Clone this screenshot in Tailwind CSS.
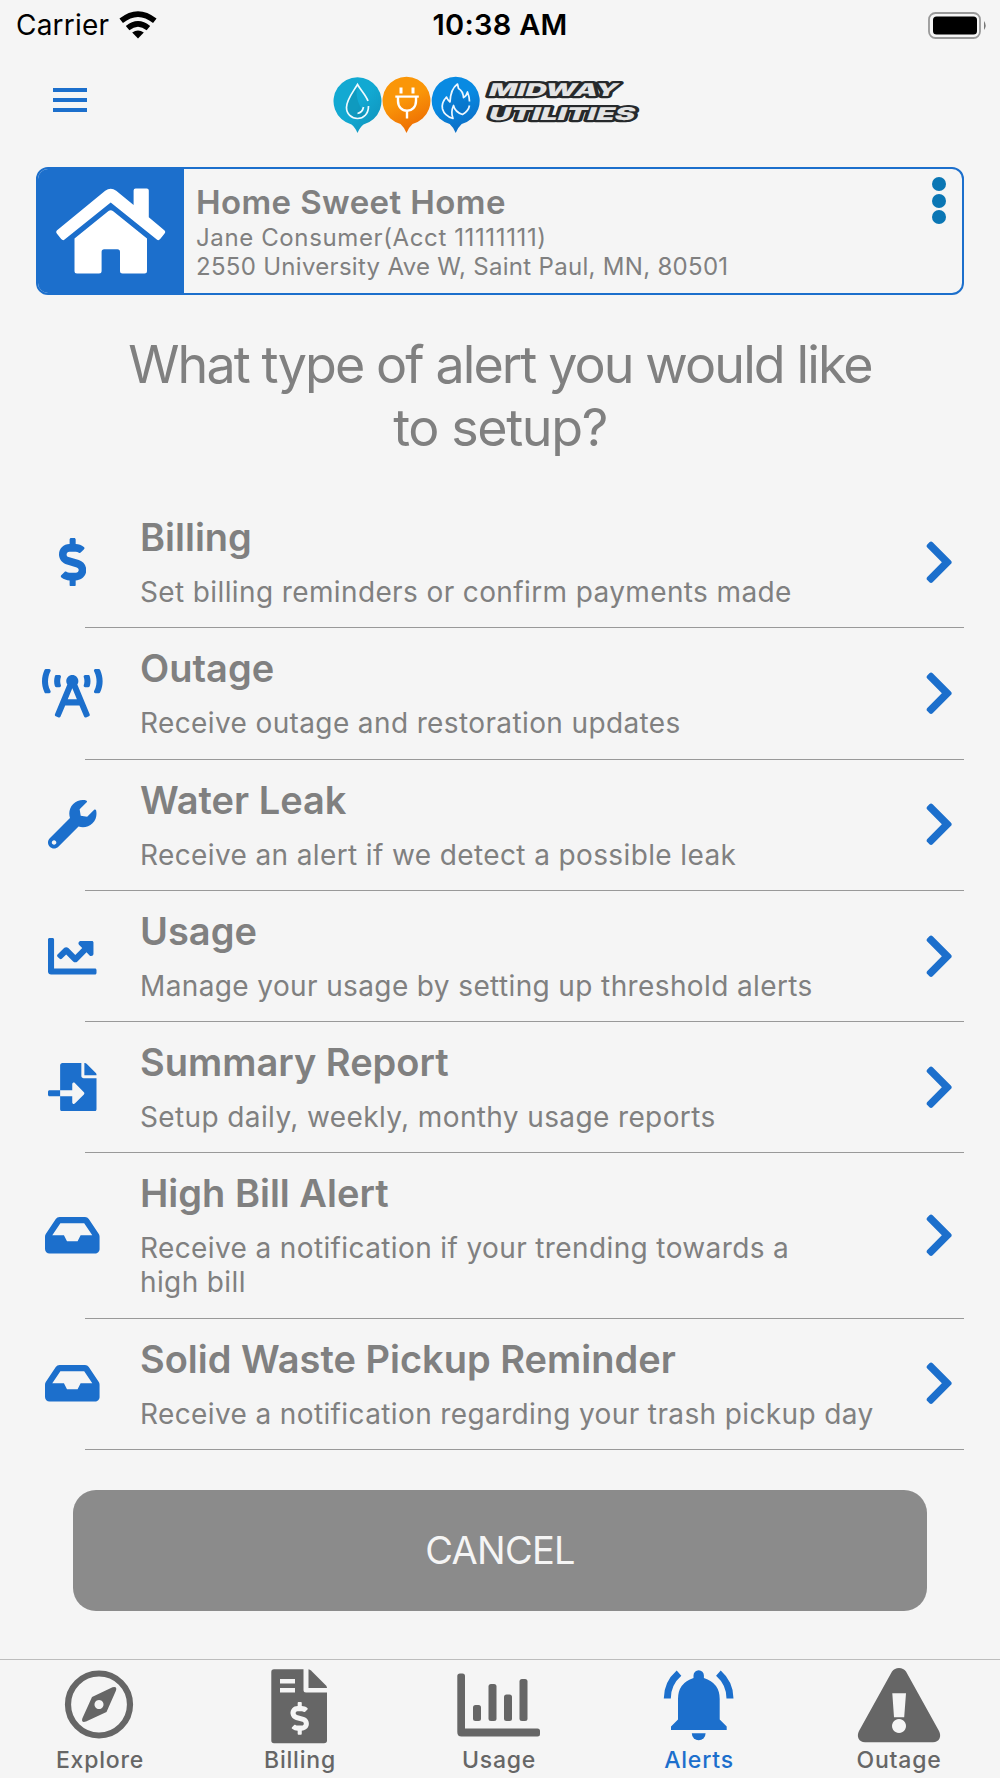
<!DOCTYPE html><html lang="en">
<head><meta charset="UTF-8"/><meta name="viewport" content="width=device-width, initial-scale=1.0"/>
<title>Midway Utilities - Alerts</title><script src="https://cdn.jsdelivr.net/npm/@tailwindcss/browser@4"></script></head>
<body class="bg-[#f5f5f5] font-['Inter',sans-serif] text-[#808080] w-[1000px] h-[1778px] flex flex-col overflow-hidden">

<!-- STATUS BAR -->
<div class="h-[50px] shrink-0 grid grid-cols-3 items-center text-black text-[28px] leading-[50px] pl-4 pr-3">
  <div class="flex items-center gap-2.5">
    <span class="tracking-[0.2px]">Carrier</span>
    <svg class="w-[38px] h-[28px]" viewBox="0 0 38 28">
      <path d="M19 27.5L13.2 21.6Q19 17.2 24.8 21.6Z"/>
      <path d="M8.6 17.2Q19 8.6 29.4 17.2M2.2 9.8Q19 -3.6 35.8 9.8" fill="none" stroke="#000" stroke-width="5.6"/>
    </svg>
  </div>
  <div class="text-center text-[29px] font-semibold tracking-[0.3px] pr-1">10:38 AM</div>
  <svg class="justify-self-end w-[60px] h-[27px]" viewBox="0 0 60 27">
    <rect x="1" y="1" width="51" height="25" rx="6.5" fill="none" stroke="#999" stroke-width="1.8"/>
    <rect x="5" y="4.5" width="44" height="18" rx="3.5"/>
    <path d="M56 9q3.3 4.500 0 9z" fill="#777"/>
  </svg>
</div>

<!-- HEADER -->
<header class="h-[117px] shrink-0 flex pl-[53px] pt-[26px]">
  <div class="mt-3 w-[34px] h-[24px] flex flex-col justify-between">
    <i class="h-[4px] bg-[#1c6fcc]"></i><i class="h-[4px] bg-[#1c6fcc]"></i><i class="h-[4px] bg-[#1c6fcc]"></i>
  </div>
  <svg class="ml-[246px] w-[308px] h-[58px]" viewBox="333 76 308 58">
    <defs>
      <linearGradient id="g1" x1="0" y1="0" x2="1" y2="1"><stop offset=".5" stop-color="#12a9d2"/><stop offset="1" stop-color="#0f8fb8"/></linearGradient>
      <linearGradient id="g2" x1="0" y1="0" x2=".4" y2="1"><stop offset=".5" stop-color="#fa9608"/><stop offset="1" stop-color="#ee7003"/></linearGradient>
      <linearGradient id="g3" x1="0" y1="0" x2=".4" y2="1"><stop offset=".5" stop-color="#088ae2"/><stop offset="1" stop-color="#0b70c8"/></linearGradient>
    </defs>
    <path d="M351.500 124.500a24 24 0 1 1 12 0q-3.500 2.500-6 8.500q-2.500-6-6-8.500z" fill="url(#g1)"/>
    <path d="M400.500 124a24 24 0 1 1 12 0q-3.500 3-6 9q-2.500-6-6-9z" fill="url(#g2)"/>
    <path d="M449.700 124a24 24 0 1 1 12 0q-3.500 3-6 9q-2.500-6-6-9z" fill="url(#g3)"/>
    <path d="M357.500 84.500C353 92 346.500 99.500 346.500 107.500C346.500 114 351.500 118.500 357.500 118.500C361 118.500 364 117 366 114.500C360 108 354 97 357.500 84.500z" fill="#0b7f9f" opacity=".35"/>
    <path d="M368 101C366 95.500 361 90.500 357.500 84.500C353 92 346.500 99.500 346.500 107.500C346.500 114 351.500 118.500 357.500 118.500C363.500 118.500 368.500 114 368.500 106M357.500 113.500Q362.500 112.500 363.500 107" fill="none" stroke="#eefaff" stroke-width="1.7"/>
    <g fill="none" stroke="#fff">
      <path d="M401 87.500v6M413 87.500v6" stroke-width="3"/>
      <path d="M395.300 96.600h23.500" stroke-width="2.200"/>
      <path d="M398 97v4c0 6 4 9.800 9 9.800s9-3.800 9-9.800v-4M407 111v7.500" stroke-width="2.400"/>
    </g>
    <path d="M444 115Q450 118 453 119L452 105L458 113L463 115L469 107L468 97L464 101L464 94L460 96L457 84L450 94L448 101L444 97z" fill="#0864b8" opacity=".35"/>
    <path d="M469.500 101.500Q469.500 97 467.500 92Q466.500 96 463.500 97.500Q463 91 458.500 88.500L457.500 84Q450.500 89 450 102Q447.500 100 446.500 97Q441 103 442.500 109Q444.500 116 453 118.500Q450.500 112 453.500 105.500Q455 112 462.500 114.500Q468.500 111 469.500 105.500" fill="none" stroke="#eef7ff" stroke-width="1.700" stroke-linejoin="round"/>
    <g font-family="Inter" font-weight="900" font-size="17.500" fill="#e4e4e4" stroke="#26292b" stroke-width="4.400" stroke-linejoin="round" paint-order="stroke">
      <text transform="translate(487.500 96) skewX(-18)" textLength="129" lengthAdjust="spacingAndGlyphs">MIDWAY</text>
      <text transform="translate(487.500 119.500) skewX(-18)" textLength="146" lengthAdjust="spacingAndGlyphs">UTILITIES</text>
    </g>
  </svg>
</header>

<main class="flex-1 px-9 flex flex-col">

  <!-- ACCOUNT CARD -->
  <section class="h-[128px] shrink-0 flex border-[2.5px] border-[#1c6fcc] rounded-xl overflow-hidden">
    <div class="w-[146px] bg-[#1c6fcc] shrink-0">
      <svg class="w-[146px] h-[124px]" viewBox="38 169 146 124" fill="#fff">
        <path d="M105.200 190.800Q110.700 186.500 116.200 190.800L133.600 205V190.500Q133.600 188.500 135.600 188.500H146.800Q148.800 188.500 148.800 190.500V217.300L164.600 230.500Q166 232 164.600 233.500L160.200 239Q158.500 241 156.800 239.500L110.700 202.500L64.600 239.500Q62.900 241 61.200 239L56.800 233.500Q55.400 232 56.800 230.500Z"/>
        <path d="M74.500 238.500L108.500 211Q110.700 209.300 112.900 211L147 238.500V271Q147 273.500 144.500 273.500H122.500Q120 273.500 120 271V252Q120 249.300 117.400 249.300H104.200Q101.600 249.300 101.600 252V271Q101.600 273.500 99 273.500H77Q74.500 273.500 74.500 271Z"/>
      </svg>
    </div>
    <div class="flex-1 pl-3 pt-3.5">
      <div class="text-[33px] leading-[39px] pb-px font-semibold tracking-[0.4px]">Home Sweet Home</div>
      <div class="text-[24px] leading-[29px] tracking-[0.62px]">Jane Consumer(Acct 11111111)</div>
      <div class="text-[24px] leading-[29px] tracking-[0.3px]">2550 University Ave W, Saint Paul, MN, 80501</div>
    </div>
    <div class="w-[30px] pt-2 flex flex-col gap-[2.700px]">
      <i class="size-[14px] rounded-full bg-[#0a76b4]"></i><i class="size-[14px] rounded-full bg-[#0a76b4]"></i><i class="size-[14px] rounded-full bg-[#0a76b4]"></i>
    </div>
  </section>

  <h1 class="mt-[38px] h-[164px] shrink-0 text-[52px] leading-[63px] text-center tracking-[-1.900px]">What type of alert you would like<br><span class="tracking-[-1.400px]">to setup?</span></h1>

  <!-- ALERT TYPES -->
  <ul id="alertList"></ul>

  <button class="mx-[37px] mt-[40px] h-[121px] shrink-0 rounded-[23px] bg-[#8b8b8b] text-[#f5f5f5] text-[38px] tracking-[-0.700px]">CANCEL</button>
</main>

<!-- TAB BAR -->
<nav class="h-[119px] shrink-0 border-t border-[#bdbdbd] grid grid-cols-5 text-center text-[23px] leading-[28px] font-medium tracking-[0.800px] text-[#666]">
  <a class="flex flex-col items-center">
    <svg class="w-[90px] h-[86px]" viewBox="55 1660 90 86" fill="currentColor">
      <circle cx="99" cy="1704.500" r="31" fill="none" stroke="currentColor" stroke-width="6.200"/>
      <path fill-rule="evenodd" d="M92 1697L112.500 1687.300Q117.300 1686 116 1690.500L106.500 1712L86 1721.500Q81 1723 82.300 1718.500ZM99 1700a4.500 4.500 0 1 0 .01 0z"/>
    </svg><span>Explore</span>
  </a>
  <a class="flex flex-col items-center">
    <svg class="w-[90px] h-[86px]" viewBox="255 1660 90 86" fill="currentColor">
      <path fill-rule="evenodd" d="M274 1669.300H303.500V1690Q303.500 1692.500 306 1692.500H327V1740.500Q327 1743.300 324 1743.300H274Q271.300 1743.300 271.300 1740.500V1672Q271.300 1669.300 274 1669.300zM280 1679v4.500h15v-4.500zM280 1688v4.500h15v-4.500z"/>
      <path d="M308.500 1669.300Q310 1669.500 311 1670.500L326 1685.500Q327 1686.500 327 1688H308.500z"/>
      <g transform="translate(290.500 1702) scale(.0640)" fill="#f5f5f5"><path d="M209.200 233.400l-108-31.600C88.700 198.200 80 186.500 80 173.500c0-16.300 13.200-29.500 29.500-29.500h66.300c12.200 0 24.200 3.700 34.200 10.500 6.100 4.100 14.300 3.100 19.500-2l34.800-34c7.100-6.900 6.100-18.400-1.800-24.500C238 74.800 207.400 64.100 176 64V16c0-8.800-7.200-16-16-16h-32c-8.800 0-16 7.200-16 16v48h-2.500C45.800 64-5.400 118.700.5 183.600c4.200 46.100 39.400 83.600 83.800 96.600l102.500 30c12.500 3.700 21.200 15.300 21.200 28.300 0 16.300-13.200 29.500-29.500 29.500h-66.300C100 368 88 364.300 78 357.500c-6.100-4.100-14.300-3.100-19.500 2l-34.800 34c-7.100 6.900-6.100 18.400 1.800 24.500 24.500 19.200 55.100 29.900 86.500 30v48c0 8.800 7.200 16 16 16h32c8.800 0 16-7.200 16-16v-48.200c46.600-.9 90.300-28.600 105.700-72.700 21.500-61.600-14.600-124.800-72.500-141.700z"/></g>
    </svg><span>Billing</span>
  </a>
  <a class="flex flex-col items-center">
    <svg class="w-[90px] h-[86px]" viewBox="455 1660 90 86" fill="currentColor">
      <path d="M460 1673.500h2.500Q465 1673.500 465 1676V1728.500H537.500Q540 1728.500 540 1731V1734Q540 1736.500 537.500 1736.500H461.500Q457.300 1736.500 457.300 1732V1676Q457.300 1673.500 460 1673.500z"/>
      <rect x="473" y="1705" width="8" height="16" rx="2.500"/><rect x="488.500" y="1684" width="8" height="37" rx="2.500"/><rect x="504" y="1694.500" width="8" height="26.500" rx="2.500"/><rect x="519.500" y="1679" width="8" height="42" rx="2.500"/>
    </svg><span class="-ml-0.5">Usage</span>
  </a>
  <a class="flex flex-col items-center text-[#1c6fcc]">
    <svg class="w-[90px] h-[86px]" viewBox="655 1660 90 86" fill="currentColor">
      <path d="M693.500 1678V1675.500a5.200 5.200 0 0 1 10.400 0V1678Q719.700 1683 719.700 1699V1719.500L726.700 1726.500V1730H671V1726.500L678 1719.500V1699Q678 1683 693.500 1678z"/>
      <path d="M691.800 1733.300h13.800a6.900 6.900 0 0 1-13.800 0z"/>
      <path d="M679 1673.200Q667.300 1683.500 667.300 1698.500M718.400 1673.200Q730 1683.500 730 1698.500" fill="none" stroke="currentColor" stroke-width="7"/>
    </svg><span class="-ml-0.5">Alerts</span>
  </a>
  <a class="flex flex-col items-center">
    <svg class="w-[90px] h-[86px]" viewBox="855 1660 90 86" fill="currentColor">
      <path fill-rule="evenodd" d="M892 1671.500Q894.500 1668 899 1668Q903.500 1668 906 1671.500L939 1731Q941 1735 939.500 1738.500Q937.500 1742.300 933 1742.300H865Q860.500 1742.300 858.500 1738.500Q857 1735 859 1731ZM892.300 1693.300L894 1717.300H904.200L906 1693.300zM899 1719a7 7 0 1 0 .01 0z"/>
    </svg><span class="-ml-0.5">Outage</span>
  </a>
</nav>

<script>
const $=id=>document.getElementById(id);

// icon: [viewBox width, path], all 512 high
const icons={
  dollar:[288,'M209.200 233.400l-108-31.600C88.700 198.200 80 186.500 80 173.500c0-16.300 13.200-29.500 29.500-29.500h66.300c12.200 0 24.200 3.700 34.200 10.500 6.100 4.100 14.300 3.100 19.500-2l34.800-34c7.100-6.900 6.100-18.400-1.800-24.500C238 74.800 207.400 64.100 176 64V16c0-8.800-7.200-16-16-16h-32c-8.800 0-16 7.200-16 16v48h-2.500C45.800 64-5.400 118.700.5 183.600c4.200 46.100 39.400 83.600 83.800 96.600l102.500 30c12.500 3.700 21.200 15.300 21.200 28.300 0 16.300-13.200 29.500-29.500 29.500h-66.300C100 368 88 364.300 78 357.500c-6.100-4.100-14.300-3.100-19.500 2l-34.800 34c-7.100 6.900-6.100 18.400 1.800 24.500 24.500 19.200 55.100 29.900 86.500 30v48c0 8.800 7.200 16 16 16h32c8.800 0 16-7.200 16-16v-48.200c46.600-.9 90.300-28.600 105.700-72.700 21.500-61.600-14.600-124.800-72.500-141.700z'],
  tower:[640,'M150.940 192h33.730c11.010 0 18.610-10.830 14.860-21.180-4.930-13.580-7.550-27.980-7.550-42.820s2.620-29.240 7.550-42.820C203.290 74.830 195.680 64 184.670 64h-33.730c-7.010 0-13.460 4.490-15.410 11.230C130.640 92.210 128 109.880 128 128c0 18.120 2.640 35.790 7.540 52.760 1.940 6.740 8.390 11.240 15.400 11.240zM89.920 23.340C95.560 12.720 87.970 0 75.960 0H40.630c-6.270 0-12.140 3.590-14.740 9.310C9.400 45.540 0 85.650 0 128c0 24.750 3.120 68.330 26.690 118.860 2.620 5.630 8.420 9.140 14.610 9.140h34.840c12.020 0 19.610-12.740 13.950-23.370-49.780-93.320-16.710-178.150-.17-209.290zM614.060 9.290C611.460 3.580 605.600 0 599.330 0h-35.420c-11.980 0-19.660 12.660-14.020 23.250 18.270 34.290 48.420 119.420.28 209.230-5.720 10.680 1.800 23.520 13.910 23.520h35.230c6.270 0 12.130-3.580 14.730-9.290C630.570 210.480 640 170.360 640 128s-9.420-82.480-25.940-118.710zM489.060 64h-33.730c-11.010 0-18.610 10.830-14.860 21.180 4.930 13.580 7.550 27.980 7.550 42.820s-2.620 29.240-7.550 42.820c-3.760 10.350 3.850 21.180 14.860 21.180h33.730c7.020 0 13.460-4.490 15.410-11.240 4.900-16.970 7.530-34.640 7.530-52.760 0-18.120-2.640-35.790-7.540-52.760-1.940-6.750-8.390-11.240-15.400-11.240zm-116.300 100.120c7.050-10.290 11.200-22.710 11.200-36.120 0-35.350-28.630-64-63.960-64-35.320 0-63.960 28.650-63.960 64 0 13.410 4.150 25.830 11.200 36.120l-130.500 313.410c-3.400 8.150.46 17.520 8.610 20.920l29.510 12.310c8.150 3.400 17.520-.46 20.910-8.610L244.960 384h150.070l49.200 118.150c3.400 8.160 12.760 12.010 20.910 8.610l29.510-12.310c8.150-3.400 12-12.770 8.610-20.920l-130.500-313.410zM271.620 320L320 203.810 368.380 320h-96.760z'],
  wrench:[512,'M507.730 109.100c-2.240-9.030-13.540-12.090-20.120-5.510l-74.360 74.360-67.880-11.310-11.310-67.880 74.360-74.360c6.620-6.620 3.430-17.900-5.660-20.160-47.380-11.740-99.550.91-136.580 37.930-39.640 39.640-50.550 97.100-34.050 147.200L18.740 402.760c-24.990 24.990-24.990 65.510 0 90.500 24.990 24.990 65.510 24.990 90.500 0l213.210-213.210c50.120 16.710 107.470 5.680 147.370-34.220 37.070-37.070 49.700-89.320 37.910-136.730zM64 472c-13.250 0-24-10.750-24-24 0-13.260 10.750-24 24-24s24 10.740 24 24c0 13.250-10.750 24-24 24z'],
  chart:[512,'M496 384H64V80c0-8.840-7.160-16-16-16H16C7.160 64 0 71.160 0 80v336c0 17.670 14.330 32 32 32h464c8.840 0 16-7.160 16-16v-32c0-8.840-7.160-16-16-16zM464 96H345.940c-21.380 0-32.090 25.850-16.970 40.970l32.400 32.400L288 242.750l-73.370-73.370c-12.500-12.500-32.760-12.500-45.250 0l-68.690 68.690c-6.250 6.250-6.250 16.380 0 22.630l22.620 22.620c6.250 6.250 16.380 6.250 22.630 0L192 237.250l73.370 73.370c12.500 12.500 32.760 12.500 45.250 0l96-96 32.400 32.400c15.120 15.120 40.970 4.410 40.970-16.970V112c.01-8.840-7.150-16-15.990-16z'],
  report:[512,'M16 288c-8.800 0-16 7.200-16 16v32c0 8.800 7.200 16 16 16h112v-64H16zm489-183L407.100 7c-4.500-4.500-10.600-7-17-7H384v128h128v-6.100c0-6.300-2.500-12.400-7-16.900zm-153 31V0H152c-13.300 0-24 10.700-24 24v264h128v-65.200c0-14.300 17.300-21.400 27.400-11.300L379 308c6.600 6.700 6.600 17.400 0 24l-95.700 96.400c-10.100 10.100-27.400 3-27.400-11.300V352H128v136c0 13.300 10.700 24 24 24h336c13.300 0 24-10.700 24-24V160H376c-13.200 0-24-10.800-24-24z'],
  inbox:[576,'M567.938 243.908L462.250 85.374A48.003 48.003 0 0 0 422.311 64H153.689a48 48 0 0 0-39.938 21.374L8.062 243.908A47.994 47.994 0 0 0 0 270.533V400c0 26.510 21.490 48 48 48h480c26.510 0 48-21.490 48-48V270.533a47.994 47.994 0 0 0-8.062-26.625zM162.252 128h251.497l85.333 128H376l-32 64H232l-32-64H76.918l85.334-128z'],
  right:[320,'M285.476 272.971L91.132 467.314c-9.373 9.373-24.569 9.373-33.941 0l-22.667-22.667c-9.357-9.357-9.375-24.522-.04-33.901L188.505 256 34.484 101.255c-9.335-9.379-9.317-24.544.04-33.901l22.667-22.667c9.373-9.373 24.569-9.373 33.941 0L285.475 239.030c9.373 9.372 9.373 24.568.001 33.941z']
};
const icon=n=>`<svg class="h-[48.500px] w-auto" viewBox="0 0 ${icons[n][0]} 512" fill="#1c6fcc"><path d="${icons[n][1]}"/></svg>`;

const alerts=[
  ['dollar','Billing','Set billing reminders or confirm payments made'],
  ['tower','Outage','Receive outage and restoration updates'],
  ['wrench','Water Leak','Receive an alert if we detect a possible leak'],
  ['chart','Usage','Manage your usage by setting up threshold alerts'],
  ['report','Summary Report','Setup daily, weekly, monthy usage reports'],
  ['inbox','High Bill Alert','Receive a notification if your trending towards a<br>high bill'],
  ['inbox','Solid Waste Pickup Reminder','Receive a notification regarding your trash pickup day']
];
$('alertList').innerHTML=alerts.map(([i,t,d])=>`
  <li>
    <div class="flex items-center pt-[18px] pb-[18.250px]">
      <div class="w-[73px] flex justify-center">${icon(i)}</div>
      <div class="flex-1 pl-[31px]">
        <h2 class="text-[38px] leading-[44px] font-semibold">${t}</h2>
        <p class="mt-4 text-[28px] leading-[34px] tracking-[0.380px] whitespace-nowrap">${d}</p>
      </div>
      <div class="pr-[10px]">${icon('right')}</div>
    </div>
    <div class="ml-[49px] h-px bg-[#999]"></div>
  </li>`).join('');
</script></body></html>
